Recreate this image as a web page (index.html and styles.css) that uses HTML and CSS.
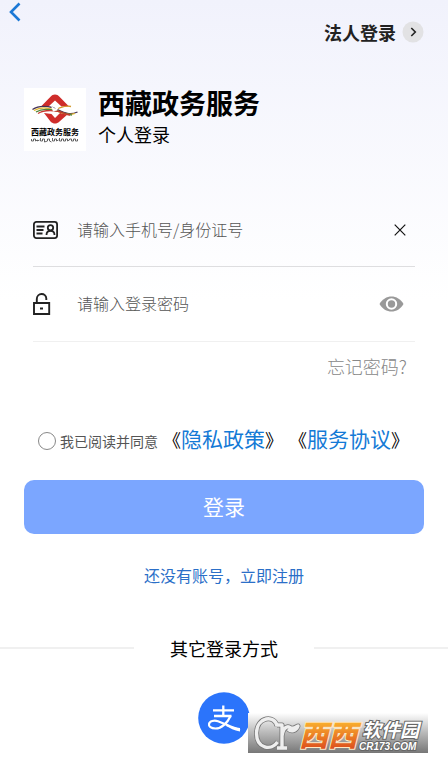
FILE: index.html
```html
<!DOCTYPE html>
<html lang="zh-CN">
<head>
<meta charset="utf-8">
<meta name="viewport" content="width=device-width, initial-scale=1">
<title>西藏政务服务</title>
<link rel="stylesheet" href="styles.css">
</head>
<body>
<main class="page">
  <header class="topbar">
    <button class="icon-button" type="button" aria-label="返回">
      <svg width="12" height="20" viewBox="0 0 12 20" fill="none" stroke="#1b78d6" stroke-width="2.600"><path d="M10.500 1.500 2 10l8.500 8.500"/></svg>
    </button>
    <a class="corporate" href="#">法人登录
      <svg width="22" height="22" viewBox="0 0 22 22" fill="none"><circle cx="11" cy="11" r="10.500" fill="#e2e2e4"/><path d="m9.300 7 4 4-4 4" stroke="#222" stroke-width="1.600"/></svg>
    </a>
  </header>

  <section class="brand">
    <svg class="logo" width="62" height="63" viewBox="0 0 62 63" role="img" aria-label="西藏政务服务">
      <rect width="62" height="63" fill="#fff"/>
      <path d="M31 6.500c2 0 3 .8 4.500 2.300L45 18.500H37.500L31 12.500l-6.500 6H17l9.500-9.700C28 7.300 29 6.500 31 6.500ZM20 25l7.500 1L31 30l5-5 8 1-8.500 7.500c-3 2.700-6 2.700-9 0Z" fill="#cf2d2b"/>
      <g fill="none" stroke-width="1.300">
        <path d="M8.500 21.500c6-4 12-4 20-2 9 3.300 15 9 25 4.500" stroke="#443052"/>
        <path d="M10 22.500c7-4 13-3 19-1 8 3 14 6.500 22 4" stroke="#e2b72e"/>
        <path d="M12 24c7-4.500 12-2.500 17-2 8 1 12 5 19 5" stroke="#52843c"/>
        <path d="M14 25.500c6-4 12-3 18-2.500 6 0 9 4 14 4" stroke="#c7372d"/>
        <path d="M32 21c5-1 9-4 15-2.500" stroke="#d39b2f"/>
      </g>
      <path d="m27 18 4 2.500 4-2-2 4-4 1Z" fill="#fff"/>
      <text x="31" y="46.500" text-anchor="middle" class="logo-name">西藏政务服务</text>
      <path d="M7.500 51v2h2v-2h2v2l2-1v1l2-1m1-2v3h2v-2h2v3l3-1v-2h2v2l2 1m1-4v3h2v-2h2v2l2-1m1-2v3h2v-2h2v2h2v-2h2v2l2-1v-1h2v2h2v-2h2v2h2v-2" fill="none" stroke="#444" stroke-width=".8"/>
    </svg>
    <div>
      <h1 class="title">西藏政务服务</h1>
      <p class="subtitle">个人登录</p>
    </div>
  </section>

  <form class="form">
    <div class="fields">
      <div class="field">
        <label for="account" aria-label="手机号/身份证号">
          <svg width="25" height="18" viewBox="0 0 25 18" fill="none" stroke="#222" stroke-width="1.800"><rect x=".9" y=".9" width="23.200" height="16.200" rx="2.500"/><path d="M3.500 5.500h8M3.500 9h7M3.500 12.500h6M13.500 14c0-3 1.500-4.200 4-4.200s4 1.200 4 4.200"/><circle cx="17.500" cy="6.800" r="2.700"/></svg>
        </label>
        <input class="input" id="account" type="text" placeholder="请输入手机号/身份证号">
        <button class="icon-button clear" type="button" aria-label="清除">
          <svg width="12" height="12" viewBox="0 0 12 12" fill="none" stroke="#111" stroke-width="1.200"><path d="m.7.700 10.600 10.600M11.300.700.700 11.300"/></svg>
        </button>
      </div>
      <div class="field field-light">
        <label for="password" aria-label="登录密码">
          <svg width="25" height="22" viewBox="0 0 25 22" fill="none" stroke="#222" stroke-width="1.900"><path d="M1 10h15.200v11H1ZM3.800 10V6c0-6.500 9.500-6.500 9.500-.5V7M7 15.500h3"/></svg>
        </label>
        <input class="input" id="password" type="password" placeholder="请输入登录密码">
        <button class="icon-button reveal" type="button" aria-label="显示密码">
          <svg width="25" height="16" viewBox="0 0 25 16"><path d="M.5 8C6-2 19-2 24.500 8 19 18 6 18 .5 8Z" fill="#999"/><circle cx="12.500" cy="8" r="4.700" fill="#999" stroke="#fff" stroke-width="2"/></svg>
        </button>
      </div>
      <a class="forgot" href="#">忘记密码?</a>
    </div>

    <div class="agreement">
      <input class="radio" id="agree" type="radio">
      <label class="agree-label" for="agree">我已阅读并同意</label>
      <span class="policies"><span>《<a href="#">隐私政策</a>》</span><span>《<a href="#">服务协议</a>》</span></span>
    </div>

    <button class="submit" type="submit">登录</button>
  </form>

  <a class="register" href="#">还没有账号，立即注册</a>

  <div class="divider"><span>其它登录方式</span></div>

  <div class="providers">
    <button class="icon-button" type="button" aria-label="支付宝登录">
      <svg width="52" height="52" viewBox="0 0 52 52"><circle cx="26" cy="26" r="25.800" fill="#2b74fb"/><g fill="none" stroke="#fff"><path d="M15 18.300h21M25.300 13.500V24M16 24h17.500" stroke-width="2.300"/><path d="M32.500 24c-3 7-9 12.500-15 12.500-4.500 0-7-2-6.500-4.500.6-3 5-4 9-2.800C27 31.500 33 35.500 42 38" stroke-width="2.200"/></g><path d="M29 32.500c5 2.300 8 3 13 3.500v3.500c-6-.8-10-3.500-14-5.500Z" fill="#fff"/></svg>
    </button>
  </div>

  <svg class="watermark" width="180" height="40" viewBox="0 0 180 40" role="img" aria-label="西西软件园 CR173.COM">
    <defs>
      <linearGradient id="shade" x2="0" y2="1"><stop stop-color="#fff"/><stop offset=".5" stop-color="#b8b8b8"/><stop offset="1" stop-color="#777"/></linearGradient>
      <linearGradient id="orange" x2="0" y2="1"><stop offset=".2" stop-color="#fbb62f"/><stop offset=".9" stop-color="#dc4b1c"/></linearGradient>
    </defs>
    <rect width="180" height="40" fill="url(#shade)"/>
    <g fill="none" stroke-linejoin="round">
      <path d="M29 13C27 2 9 3 8.500 20c0 16 15 18 21 9M29 12h5v22M29 35h10M34 23c1-8 5-11 9-8 3 1 5-1 7-2-2 5-7 6-10 3" stroke="#777" stroke-width="5"/>
      <path d="M29 13C27 2 9 3 8.500 20c0 16 15 18 21 9M29 12h5v22M29 35h10M34 23c1-8 5-11 9-8 3 1 5-1 7-2-2 5-7 6-10 3" stroke="#eee" stroke-width="3.400"/>
    </g>
    <text class="mark-lead" x="51" y="33" fill="url(#orange)">西西</text>
    <text class="mark-name" x="114" y="24">软件园</text>
    <text class="mark-site" x="111" y="37">CR173.COM</text>
  </svg>
</main>
</body>
</html>
```
FILE: styles.css
```css
* {
  box-sizing: border-box;
}

body {
  margin: 0;
  background: #fff;
  color: #000;
  font-family: "Noto Sans CJK SC", sans-serif;
}

a {
  color: inherit;
  text-decoration: none;
}

svg {
  display: block;
}

.page {
  position: relative;
  display: flex;
  flex-direction: column;
  padding-bottom: 19px;
  background: linear-gradient(#f1f2fc, #fff 300px);
}

.icon-button {
  padding: 0;
  border: 0;
  background: none;
}

.topbar {
  display: flex;
  align-items: flex-start;
  justify-content: space-between;
  height: 56px;
  padding: 2px 24px 0 9px;
}

.corporate {
  display: flex;
  align-items: center;
  gap: 6px;
  padding-top: 16px;
  color: #222;
  font-size: 18px;
  font-weight: 700;
  line-height: 28px;
}

.brand {
  display: flex;
  gap: 12px;
  margin-top: 32px;
  padding: 0 24px;
}

.logo-name {
  font-size: 8px;
  font-weight: 700;
}

.title {
  margin: 0;
  font-size: 27px;
  font-weight: 700;
  line-height: 30px;
}

.subtitle {
  margin: 0;
  font-size: 18px;
  line-height: 32px;
}

.form {
  display: flex;
  flex-direction: column;
  margin-top: 42px;
  padding: 0 24px;
}

.fields {
  display: flex;
  flex-direction: column;
  padding: 0 9px;
}

.field {
  display: flex;
  align-items: center;
  gap: 19px;
  height: 74px;
  border-bottom: 1px solid #dedee0;
}

.field-light {
  height: 75px;
  border-color: #f0f0f0;
}

.input {
  flex: 1;
  min-width: 0;
  padding: 0 0 2px;
  border: 0;
  outline: 0;
  background: none;
  font: 300 16px/24px "Noto Sans CJK SC", sans-serif;
}

.input::placeholder {
  color: #555;
  opacity: 1;
}

.clear {
  margin-right: 9px;
}

.reveal {
  margin-right: 11px;
}

.forgot {
  align-self: flex-end;
  margin-top: 11px;
  padding-right: 8px;
  color: #888;
  font-size: 18px;
  font-weight: 300;
  line-height: 26px;
}

.agreement {
  display: flex;
  align-items: center;
  margin-top: 44px;
  padding-left: 14px;
  white-space: nowrap;
}

.radio {
  width: 18px;
  height: 18px;
  margin: 5px 4px 0 0;
  border: 1px solid #888;
  border-radius: 50%;
  background: #fff;
  appearance: none;
}

.radio:checked {
  border: 5px solid #2b74fb;
}

.agree-label {
  padding-top: 4px;
  color: #555;
  font-size: 14px;
  line-height: 20px;
}

.policies {
  display: flex;
  gap: 6px;
  margin-left: 5px;
  font-size: 18px;
  line-height: 30px;
}

.policies a {
  color: #147ad6;
  font-size: 21px;
}

.submit {
  height: 54px;
  margin-top: 26px;
  padding: 0 0 2px;
  border: 0;
  border-radius: 10px;
  background: #7ba6ff;
  color: #fff;
  font: 400 21px/30px "Noto Sans CJK SC", sans-serif;
}

.register {
  align-self: center;
  margin-top: 29px;
  color: #2b6fc8;
  font-size: 16px;
  line-height: 24px;
}

.divider {
  display: flex;
  align-items: center;
  gap: 36px;
  margin-top: 48px;
  font-size: 18px;
  line-height: 26px;
}

.divider::before,
.divider::after {
  content: "";
  flex: 1;
  height: 2px;
  background: #f0f0f0;
}

.providers {
  display: flex;
  justify-content: center;
  margin-top: 31px;
}

.watermark {
  position: absolute;
  right: 20px;
  bottom: 10px;
}

.mark-lead,
.mark-name,
.mark-site {
  stroke-width: 2px;
  paint-order: stroke;
  font-style: italic;
  font-weight: 700;
}

.mark-lead {
  stroke: #ffeac5;
  font-size: 29px;
  font-weight: 900;
}

.mark-name {
  fill: #fff;
  stroke: #666;
  font-size: 19px;
}

.mark-site {
  fill: #fff;
  stroke: #666;
  font-family: "Liberation Sans", sans-serif;
  font-size: 10px;
}
```
